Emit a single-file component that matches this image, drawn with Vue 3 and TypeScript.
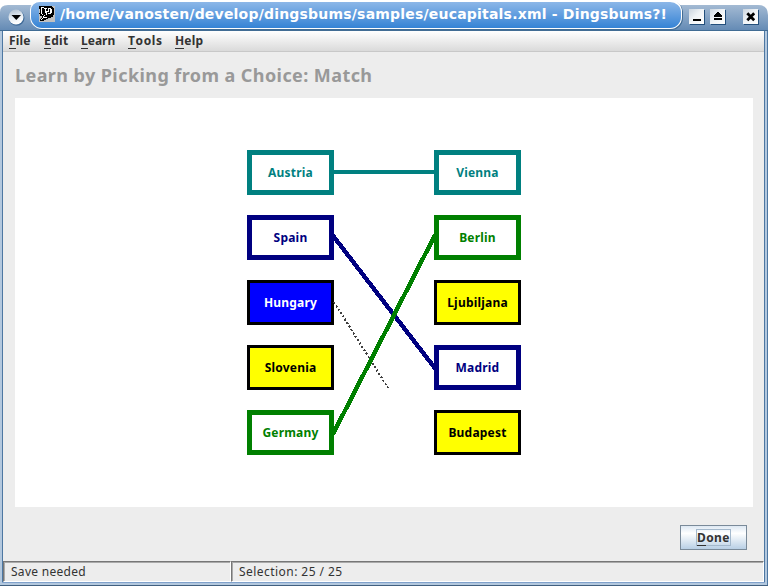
<script setup lang="ts">
type Tone = 'teal' | 'navy' | 'green' | 'open' | 'picked'
interface Card { label: string; tone: Tone }

const menus: string[] = ['File', 'Edit', 'Learn', 'Tools', 'Help']

const countries: Card[] = [
  { label: 'Austria', tone: 'teal' },
  { label: 'Spain', tone: 'navy' },
  { label: 'Hungary', tone: 'picked' },
  { label: 'Slovenia', tone: 'open' },
  { label: 'Germany', tone: 'green' },
]
const capitals: Card[] = [
  { label: 'Vienna', tone: 'teal' },
  { label: 'Berlin', tone: 'green' },
  { label: 'Ljubiljana', tone: 'open' },
  { label: 'Madrid', tone: 'navy' },
  { label: 'Budapest', tone: 'open' },
]
</script>

<template>
  <div class="window">
    <header class="titlebar">
      <div class="titlebar-left">
        <svg class="round-button" width="17" height="17" viewBox="0 0 17 17">
          <defs>
            <linearGradient id="knob" x1="0" y1="0" x2="0.3" y2="1">
              <stop offset="0" stop-color="#a9b9ca" />
              <stop offset="0.55" stop-color="#e3eaf1" />
              <stop offset="1" stop-color="#ffffff" />
            </linearGradient>
          </defs>
          <circle cx="8.7" cy="8.9" r="7.8" fill="#416c9a" />
          <circle cx="8" cy="8" r="7.5" fill="url(#knob)" />
          <path d="M3.5 6H13L8.3 11Z" fill="#000" />
        </svg>
      </div>
      <div class="tab">
        <svg class="app-icon" width="16" height="16" viewBox="0 0 16 16" shape-rendering="crispEdges">
          <rect width="16" height="16" fill="#c0c0c0" />
          <path d="M0 0H13V1H14V2H15V9H14V11H12V12H9V13H7V14H5V15H1V13H2V12H3V10H1V8H0V7H1V3H0Z" fill="#000" />
          <path d="M2 1H5V2H3V8H4V10H5V12H4V13H3V14H2V13H3V12H4V9H3V8H2ZM5 2H8V3H7V7H6V3H5ZM9 2H12V3H13V7H12V8H9V7H11V3H10V6H9ZM7 5H9V6H8V9H7ZM5 9H6V10H5ZM5 11H8V12H5Z" fill="#fff" />
        </svg>
        <span class="caption">/home/vanosten/develop/dingsbums/samples/eucapitals.xml - Dingsbums?!</span>
      </div>
      <div class="controls">
        <span class="control"><svg width="15" height="15" viewBox="0 0 15 15"><path d="M4 10H12V12H4Z" /></svg></span>
        <span class="control"><svg width="15" height="15" viewBox="0 0 15 15" shape-rendering="crispEdges"><path d="M7 3H9V4H10V5H11V6H12V8H4V6H5V5H6V4H7ZM4 9H12V11H4Z" /></svg></span>
        <span class="control close"><svg width="15" height="15" viewBox="0 0 15 15"><path d="M4.3 4.3L11.2 11.2M11.2 4.3L4.3 11.2" stroke="#000" stroke-width="2.8" /></svg></span>
      </div>
    </header>

    <div class="frame">
      <nav class="menubar">
        <span v-for="m in menus" :key="m" class="menu" :class="'menu-' + m.toLowerCase()"><span class="mnemonic">{{ m[0] }}</span>{{ m.slice(1) }}</span>
      </nav>

      <h1 class="heading">Learn by Picking from a Choice: Match</h1>

      <main class="board">
        <div class="match">
          <div class="column">
            <div v-for="c in countries" :key="c.label" class="card" :class="c.tone">{{ c.label }}</div>
          </div>
          <svg class="links" width="100" height="305" viewBox="0 0 100 305" shape-rendering="crispEdges">
            <path d="M0 22H100" stroke="#008080" stroke-width="4" />
            <path d="M0 87L100 217" stroke="#000080" stroke-width="4.4" stroke-linecap="square" />
            <path d="M0 152L54 238" stroke="#404040" stroke-width="2" stroke-dasharray="2 2" />
            <path d="M0 282L100 87" stroke="#008000" stroke-width="4.4" stroke-linecap="square" />
          </svg>
          <div class="column">
            <div v-for="c in capitals" :key="c.label" class="card" :class="c.tone">{{ c.label }}</div>
          </div>
        </div>
      </main>

      <div class="actions">
        <button class="done" type="button"><span class="focus"><span class="mnemonic">D</span>one</span></button>
      </div>

      <footer class="status">
        <div class="cell saved">Save needed</div>
        <div class="cell selection">Selection: 25 / 25</div>
      </footer>
    </div>
  </div>
</template>

<style>
body { margin: 0; background: #fff; overflow: hidden; }
</style>

<style scoped>
.window {
  box-sizing: border-box;
  width: 768px;
  height: 586px;
  display: flex;
  flex-direction: column;
  font-family: "Noto Sans", "Open Sans", sans-serif;
  color: #333;
  background: #fff;
}
.titlebar {
  height: 31px;
  box-sizing: border-box;
  display: flex;
  background:
    linear-gradient(#416c94, #416c94) 0 30px / 768px 1px no-repeat,
    linear-gradient(#a3bad3, #658bb5) 0 5px / 768px 25px no-repeat;
  clip-path: path("M0 31V12Q0 5 8 5H30V0H684V5H758Q768 5 768 15V31Z");
}
.titlebar-left { width: 30px; padding: 9px 0 0 8px; box-sizing: border-box; }
.round-button { display: block; }
.tab {
  box-sizing: border-box;
  width: 652px;
  height: 29px;
  display: flex;
  align-items: flex-start;
  padding: 4px 0 0 8px;
  border: 1.5px solid #fff;
  border-top: 2px solid #fff;
  border-radius: 10px 12px 12px 12px;
  background: linear-gradient(#8cb7e8, #3583d5);
  box-shadow: 1px 1px 0 #416c94;
}
.app-icon { display: block; }
.caption {
  margin-left: 5px;
  font: bold 14px/17px "DejaVu Sans", sans-serif;
  letter-spacing: 0.2px;
  color: #fff;
  white-space: nowrap;
}
.controls { display: flex; padding: 9px 0 0 7px; gap: 6px; }
.control {
  width: 15px;
  height: 15px;
  background: linear-gradient(135deg, #cbd5df, #eff3f6 45%, #fff);
  box-shadow: 1px 1px 0 #234f7c;
}
.control svg { display: block; }
.close { margin-left: 12px; }
.frame {
  box-sizing: border-box;
  height: 555px;
  padding: 0 4px 4px 3px;
  display: flex;
  flex-direction: column;
  background:
    linear-gradient(#416080, #416080) 0 100% / 100% 1px no-repeat,
    linear-gradient(#4d77a2, #4d77a2) 100% 0 / 1px 100% no-repeat,
    linear-gradient(#4d77a2, #4d77a2) 2px 0 / 1px 551px no-repeat,
    linear-gradient(#4d77a2, #4d77a2) 764px 0 / 1px 551px no-repeat,
    linear-gradient(#80a1cb, #80a1cb) 2px 551px / 763px 1px no-repeat,
    #b3c8de;
}
.menubar {
  height: 21px;
  box-sizing: border-box;
  display: flex;
  border-bottom: 1px solid #c8c8c8;
  background: linear-gradient(#fff, #dadada);
  font-size: 12px;
  font-weight: bold;
  letter-spacing: 0.15px;
  line-height: 20px;
  padding-left: 6px;
}
.menu { white-space: nowrap; }
.menu-file { width: 35px; }
.menu-edit { width: 37px; letter-spacing: 0.4px; }
.menu-learn { width: 47px; letter-spacing: 0; }
.menu-tools { width: 47px; letter-spacing: 0.6px; }
.mnemonic { display: inline-block; height: 14px; line-height: 14px; border-bottom: 1px solid #333; }
.heading {
  margin: 0;
  height: 46px;
  padding-left: 12px;
  font-size: 18px;
  font-weight: bold;
  letter-spacing: 0.42px;
  line-height: 46px;
  color: #999;
  background: #ededed;
  white-space: nowrap;
}
.board {
  height: 409px;
  box-sizing: border-box;
  padding-top: 52px;
  display: flex;
  justify-content: center;
  background: #fff;
  border: solid #ededed;
  border-width: 0 11px 0 12px;
}
.match { display: flex; }
.column { display: flex; flex-direction: column; gap: 20px; }
.card {
  box-sizing: border-box;
  width: 87px;
  height: 45px;
  display: flex;
  align-items: center;
  justify-content: center;
  border: 5px solid currentColor;
  background: #fff;
  font-size: 12px;
  font-weight: bold;
  letter-spacing: 0.2px;
  line-height: 16px;
}
.teal { color: #008080; }
.navy { color: #000080; }
.green { color: #008000; }
.open { color: #000; border-width: 3px; background: #ff0; }
.picked { color: #fff; border: 3px solid #000; background: #00f; }
.links { display: block; overflow: visible; }
.actions {
  height: 54px;
  box-sizing: border-box;
  padding: 18px 17px 0 0;
  display: flex;
  justify-content: flex-end;
  align-items: flex-start;
  background: #ededed;
}
.done {
  width: 67px;
  height: 25px;
  padding: 0;
  display: flex;
  align-items: center;
  justify-content: center;
  border: 1px solid #7a8a99;
  border-radius: 0;
  background: linear-gradient(#dde8f3, #fff 32%, #b8cfe5);
  font: bold 12px "Noto Sans", sans-serif;
  letter-spacing: 0.4px;
  color: #333;
}
.focus {
  box-sizing: border-box;
  width: 35px;
  height: 17px;
  border: 1px solid #a3b8cc;
  line-height: 15px;
  text-align: left;
  white-space: nowrap;
}
.status { height: 21px; display: flex; background: #ededed; }
.cell {
  box-sizing: border-box;
  height: 21px;
  padding-left: 7px;
  border-style: solid;
  border-width: 1px;
  border-color: #777 #fff #fff #777;
  box-shadow: inset 1px 1px 0 #aaa;
  font-size: 12px;
  line-height: 19px;
  white-space: nowrap;
}
.saved { width: 228px; letter-spacing: 0.28px; }
.selection { flex: 1; letter-spacing: 0.45px; }
</style>
